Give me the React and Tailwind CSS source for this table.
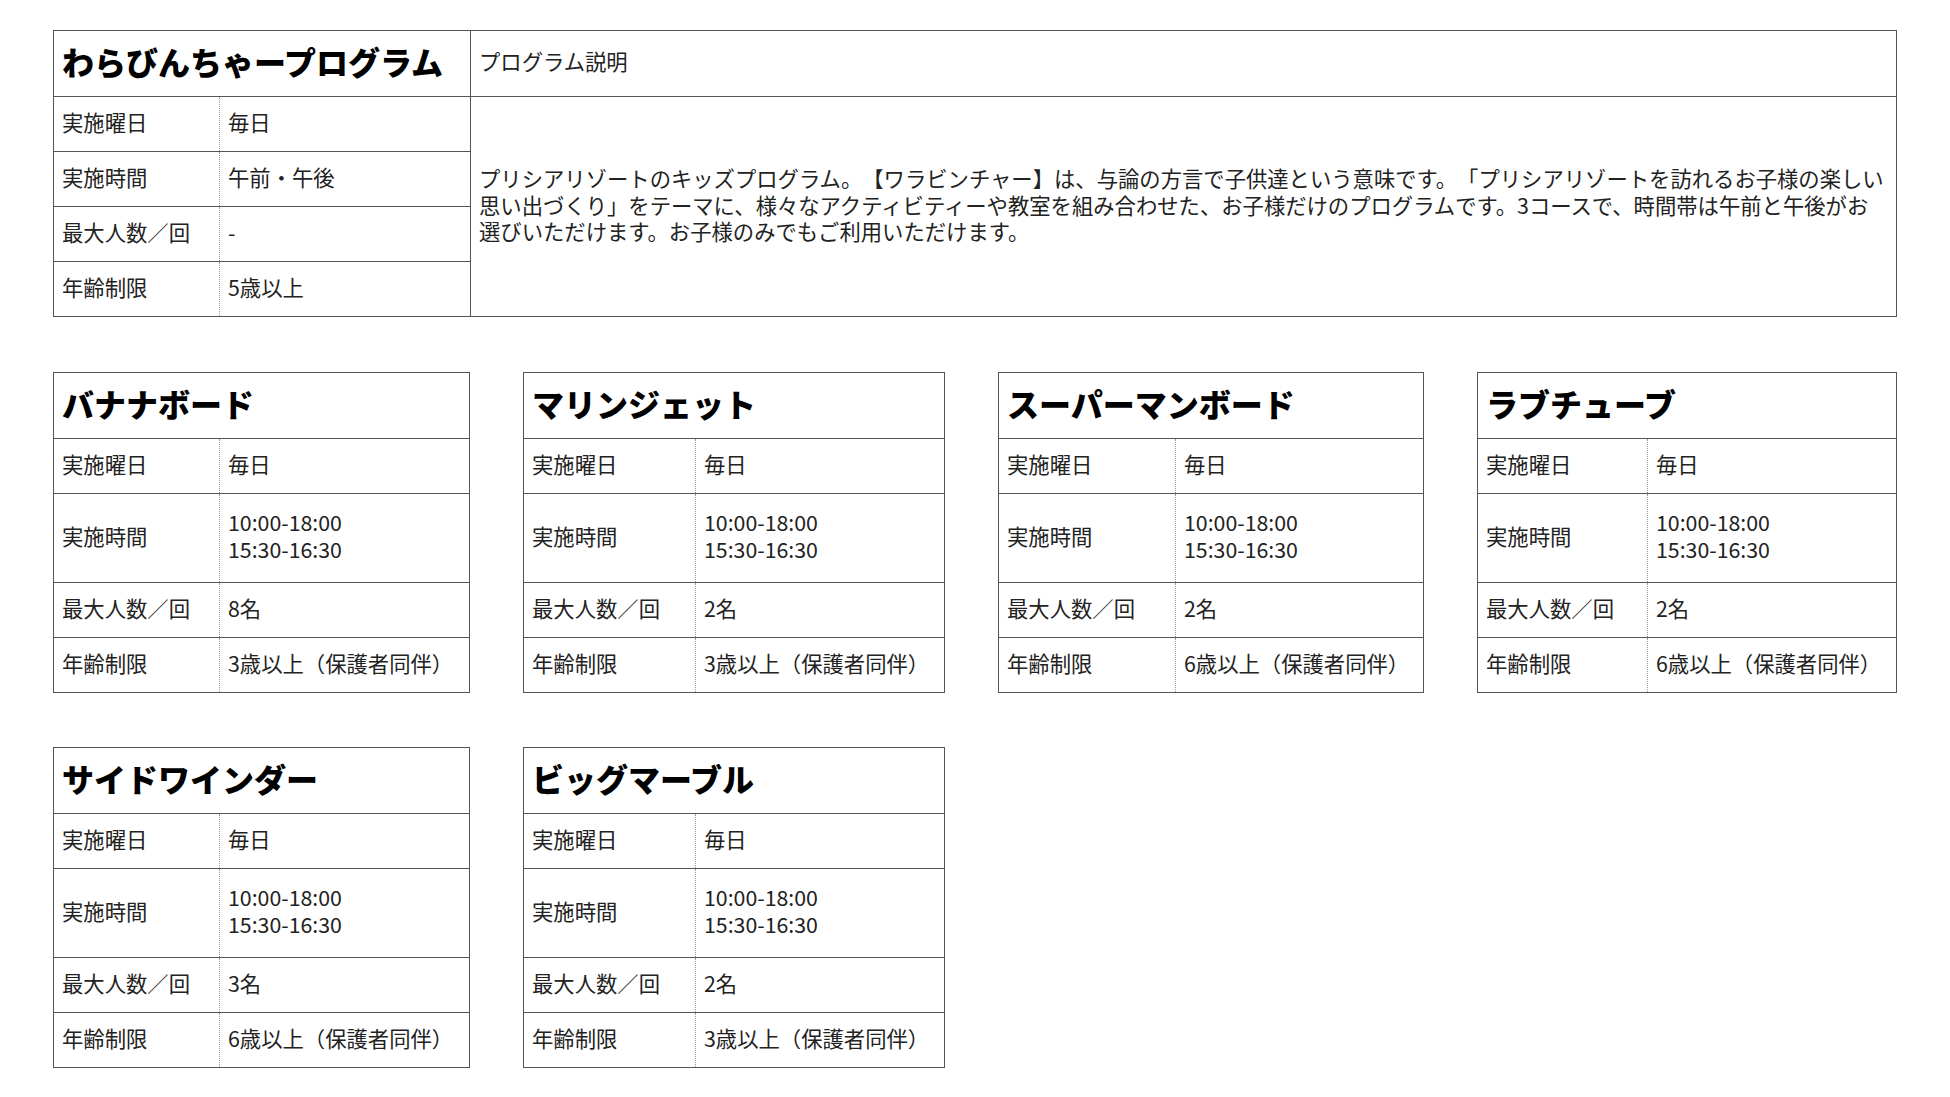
import React from "react";

const programs = [
  { title: "バナナボード", cap: "8名", age: "3歳以上（保護者同伴）" },
  { title: "マリンジェット", cap: "2名", age: "3歳以上（保護者同伴）" },
  { title: "スーパーマンボード", cap: "2名", age: "6歳以上（保護者同伴）" },
  { title: "ラブチューブ", cap: "2名", age: "6歳以上（保護者同伴）" },
  { title: "サイドワインダー", cap: "3名", age: "6歳以上（保護者同伴）" },
  { title: "ビッグマーブル", cap: "2名", age: "3歳以上（保護者同伴）" },
];

const labelWidths = ["w-[165px]", "w-[171px]", "w-[176px]", "w-[169px]"];

function Row({ label, lw, h, last, children }) {
  return (
    <div className={`flex ${h} ${last ? "" : "border-b border-[#555]"}`}>
      <div className={`${lw} shrink-0 flex items-center pl-[8px] pb-[6px]`}>{label}</div>
      <div className="flex-1 flex items-center pl-[8px] pb-[6px] border-l border-dotted border-[#9a9a9a]">
        {children}
      </div>
    </div>
  );
}

function Card({ p, idx }) {
  const lw = labelWidths[idx % 4];
  return (
    <div className="border border-[#555] flex flex-col bg-white">
      <div className="h-[66px] border-b border-[#555] flex items-center pl-[8px] pb-[5px] text-[32px] font-black text-black leading-none">
        {p.title}
      </div>
      <Row label="実施曜日" lw={lw} h="h-[55px]">毎日</Row>
      <Row label="実施時間" lw={lw} h="h-[89px]">
        <div className="leading-[27px]">
          10:00-18:00
          <br />
          15:30-16:30
        </div>
      </Row>
      <Row label="最大人数／回" lw={lw} h="h-[55px]">{p.cap}</Row>
      <Row label="年齢制限" lw={lw} h="h-[54px]" last>{p.age}</Row>
    </div>
  );
}

export default function App() {
  return (
    <div className="min-h-[1097px] w-[1950px] bg-white text-[#222] text-[21.33px] leading-[27px] [text-spacing-trim:space-all] font-['Noto_Sans_CJK_JP','Noto_Sans',sans-serif] pt-[30px] pl-[53px]">
      <div className="w-[1844px] border border-[#555] flex">
        <div className="w-[416px] shrink-0 flex flex-col">
          <div className="h-[66px] border-b border-[#555] flex items-center pl-[8px] pb-[5px] text-[32px] font-black text-black leading-none">
            わらびんちゃープログラム
          </div>
          <Row label="実施曜日" lw="w-[165px]" h="h-[55px]">毎日</Row>
          <Row label="実施時間" lw="w-[165px]" h="h-[55px]">午前・午後</Row>
          <Row label="最大人数／回" lw="w-[165px]" h="h-[55px]">-</Row>
          <Row label="年齢制限" lw="w-[165px]" h="h-[54px]" last>5歳以上</Row>
        </div>
        <div className="flex-1 flex flex-col border-l border-[#555]">
          <div className="h-[66px] border-b border-[#555] flex items-center pl-[8px] pb-[6px]">プログラム説明</div>
          <div className="flex-1 flex items-center pl-[8px] pb-[3px] whitespace-nowrap">
            <div className="leading-[26.7px]">
              プリシアリゾートのキッズプログラム。【ワラビンチャー】は、与論の方言で子供達という意味です。「プリシアリゾートを訪れるお子様の楽しい
              <br />
              思い出づくり」をテーマに、様々なアクティビティーや教室を組み合わせた、お子様だけのプログラムです。3コースで、時間帯は午前と午後がお
              <br />
              選びいただけます。お子様のみでもご利用いただけます。
            </div>
          </div>
        </div>
      </div>

      <div className="mt-[55px] grid grid-cols-[417px_422px_426px_420px] gap-x-[53px] gap-y-[54px] items-start">
        {programs.map((p, i) => (
          <Card key={p.title} p={p} idx={i} />
        ))}
      </div>
    </div>
  );
}
